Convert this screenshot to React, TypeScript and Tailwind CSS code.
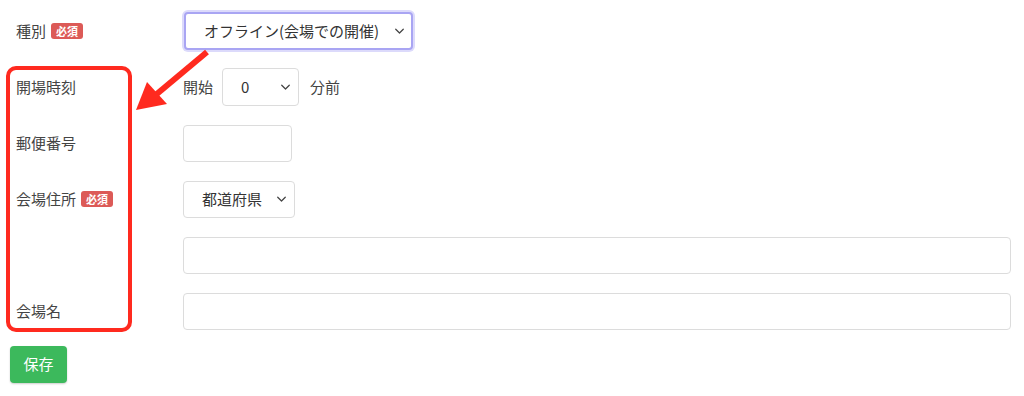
import React from 'react';

const font = { fontFamily: '"Noto Sans CJK JP", "Noto Sans", sans-serif' };

function Badge() {
  return (
    <span className="ml-[5px] inline-flex h-[16px] items-center rounded-[3px] bg-[#dc5a57] px-[5px] text-[11px] font-bold leading-none text-white">
      必須
    </span>
  );
}

function Chevron() {
  return (
    <svg className="pointer-events-none absolute right-[8px] top-1/2 -translate-y-1/2" width="11" height="11" viewBox="0 0 16 16" fill="none">
      <path d="M2.5 5.5 8 11l5.5-5.5" stroke="#444" strokeWidth="1.8" strokeLinecap="round" strokeLinejoin="round" />
    </svg>
  );
}

function Select({ value, className = '', focused = false }: { value: string; className?: string; focused?: boolean }) {
  return (
    <div className={`relative ${className}`}>
      <select
        defaultValue={value}
        className={`h-full w-full appearance-none rounded-[4px] bg-white pl-[18px] pr-[26px] text-[15px] text-[#333] outline-none ${
          focused ? 'border-2 border-[#a9a5f3] shadow-[0_0_0_2px_#dcdafb]' : 'border border-[#dcdcdc]'
        }`}
        style={font}
      >
        <option>{value}</option>
      </select>
      <Chevron />
    </div>
  );
}

function Row({ label, badge, children }: { label?: string; badge?: boolean; children?: React.ReactNode }) {
  return (
    <div className="flex h-[36px] items-center">
      <div className="flex w-[183px] shrink-0 items-center pl-[16px] text-[15px] text-[#444]">
        {label}
        {badge && <Badge />}
      </div>
      <div className="flex flex-1 items-center">{children}</div>
    </div>
  );
}

export default function App() {
  return (
    <div className="relative h-[396px] w-[1024px] bg-white" style={font}>
      <div className="flex flex-col gap-[20px] pr-[13px] pt-[13px]">
        <Row label="種別" badge>
          <Select value="オフライン(会場での開催)" focused className="ml-[1px] h-[38px] w-[229px]" />
        </Row>
        <Row label="開場時刻">
          <span className="text-[15px] text-[#444]">開始</span>
          <Select value="0" className="ml-[9px] h-[38px] w-[77px]" />
          <span className="ml-[11px] text-[15px] text-[#444]">分前</span>
        </Row>
        <Row label="郵便番号">
          <input className="h-[37px] w-[109px] rounded-[4px] border border-[#dcdcdc] outline-none" />
        </Row>
        <Row label="会場住所" badge>
          <Select value="都道府県" className="h-[37px] w-[112px]" />
        </Row>
        <Row>
          <input className="h-[37px] w-full rounded-[4px] border border-[#dcdcdc] outline-none" />
        </Row>
        <Row label="会場名">
          <input className="h-[37px] w-full rounded-[4px] border border-[#dcdcdc] outline-none" />
        </Row>
      </div>
      <div className="pl-[10px] pt-[17px]">
        <button className="h-[37px] w-[57px] rounded-[4px] bg-[#3cb95c] text-[15px] text-white shadow-[0_1px_2px_rgba(0,0,0,0.2)]">
          保存
        </button>
      </div>

      {/* annotation */}
      <div className="pointer-events-none absolute left-[6px] top-[66px] h-[266px] w-[126px] rounded-[10px] border-[4px] border-[#ff2a1f]" />
      <svg className="pointer-events-none absolute left-0 top-0" width="1024" height="396">
        <line x1="207" y1="52" x2="152" y2="98" stroke="#ff2a1f" strokeWidth="6" />
        <polygon points="136,110 147,82 167,104" fill="#ff2a1f" />
      </svg>
    </div>
  );
}
